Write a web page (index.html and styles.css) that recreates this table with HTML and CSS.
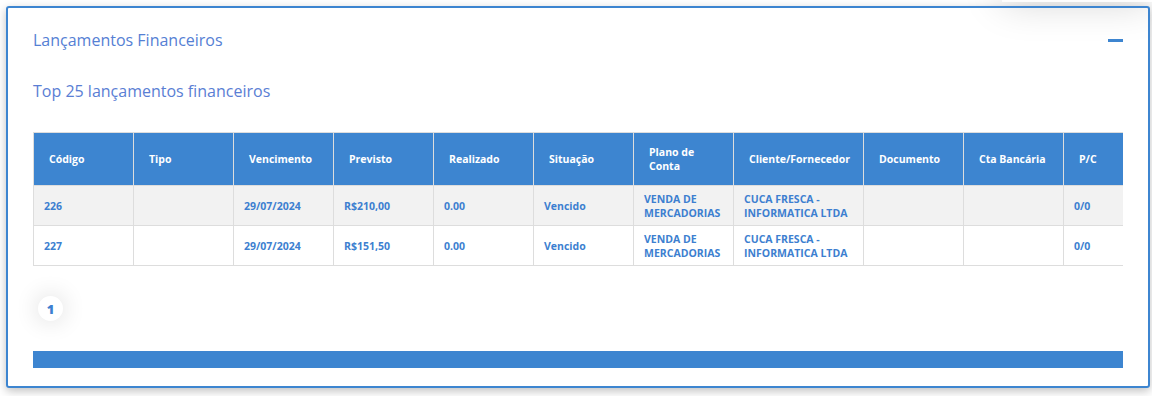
FILE: index.html
```html
<!DOCTYPE html>
<html lang="pt-BR">
<head>
<meta charset="utf-8">
<title>Lançamentos Financeiros</title>
<link rel="stylesheet" href="styles.css">
</head>
<body>
<div class="page">
  <div class="top-shadow"></div>
  <section class="card">
    <header class="card-head">
      <h2 class="card-title">Lançamentos Financeiros</h2>
      <span class="collapse"></span>
    </header>
    <h3 class="subtitle">Top 25 lançamentos financeiros</h3>
    <div class="table-wrap">
      <table class="grid">
        <colgroup>
          <col class="c100"><col class="c100"><col class="c100"><col class="c100"><col class="c100"><col class="c100"><col class="c100"><col class="c130"><col class="c100"><col class="c100"><col class="c100">
        </colgroup>
        <thead>
          <tr>
            <th>Código</th><th>Tipo</th><th>Vencimento</th><th>Previsto</th><th>Realizado</th><th>Situação</th><th>Plano de Conta</th><th>Cliente/Fornecedor</th><th>Documento</th><th>Cta Bancária</th><th>P/C</th>
          </tr>
        </thead>
        <tbody>
          <tr class="odd">
            <td>226</td><td></td><td>29/07/2024</td><td>R$210,00</td><td>0.00</td><td>Vencido</td><td>VENDA DE MERCADORIAS</td><td>CUCA FRESCA - INFORMATICA LTDA</td><td></td><td></td><td>0/0</td>
          </tr>
          <tr>
            <td>227</td><td></td><td>29/07/2024</td><td>R$151,50</td><td>0.00</td><td>Vencido</td><td>VENDA DE MERCADORIAS</td><td>CUCA FRESCA - INFORMATICA LTDA</td><td></td><td></td><td>0/0</td>
          </tr>
        </tbody>
      </table>
    </div>
    <nav class="pager">
      <span class="page-btn">1</span>
    </nav>
    <div class="footer-bar"></div>
  </section>
</div>
</body>
</html>
```
FILE: styles.css
```css
* { box-sizing: border-box; }
html, body { margin: 0; padding: 0; background: #fff; }
body { font-family: "Open Sans", "Liberation Sans", sans-serif; }

.page {
  position: relative;
  padding: 6px 2px 8px 6px;
  height: 396px;
  overflow: hidden;
}

.top-shadow {
  position: absolute;
  top: -40px;
  right: 0;
  width: 150px;
  height: 42px;
  background: #fff;
  box-shadow: 0 0 40px rgba(0,0,0,0.18);
}

.card {
  position: relative;
  height: 382px;
  border: 2px solid #3d85d0;
  border-radius: 3px;
  background: transparent;
  box-shadow: 0 3px 10px rgba(0,0,0,0.25);
  padding: 21px 25px 0 25px;
  display: flex;
  flex-direction: column;
}

.card-head {
  display: flex;
  align-items: center;
  justify-content: space-between;
  height: 22px;
}

.card-title {
  margin: 0;
  font-size: 16px;
  line-height: 22px;
  font-weight: 400;
  color: #5580d4;
}

.collapse {
  width: 15px;
  height: 3px;
  background: #3d85d0;
}

.subtitle {
  margin: 28px 0 0 0;
  font-size: 16px;
  line-height: 24px;
  font-weight: 400;
  color: #5a7ed4;
}

.table-wrap {
  margin-top: 29px;
  overflow: hidden;
  width: 1090px;
}

.grid {
  table-layout: fixed;
  width: 1130px;
  border-collapse: collapse;
  font-size: 10.5px;
  font-weight: 700;
}
.c100 { width: 100px; }
.c130 { width: 130px; }

.grid th, .grid td {
  border: 1px solid #dddddd;
  text-align: left;
  vertical-align: middle;
  line-height: 14px;
}
.grid th {
  background: #3d85d0;
  color: #fff;
  padding: 11px 15px;
  height: 53px;
}
.grid td {
  color: #3d7fd0;
  padding: 5px 10px;
  height: 40px;
  background: #fff;
}
.grid tr.odd td { background: #f2f2f2; }

.pager {
  margin-top: 30px;
  height: 25px;
  display: flex;
  padding-left: 5px;
}
.page-btn {
  width: 25px;
  height: 25px;
  border-radius: 50%;
  background: #fff;
  box-shadow: 0 0 24px rgba(0,0,0,0.16);
  color: #3d7fd0;
  font-weight: 800;
  font-size: 13px;
  display: flex;
  align-items: center;
  justify-content: center;
}

.footer-bar {
  margin-top: 30px;
  height: 17px;
  width: 1090px;
  background: #3d85d0;
}
```
